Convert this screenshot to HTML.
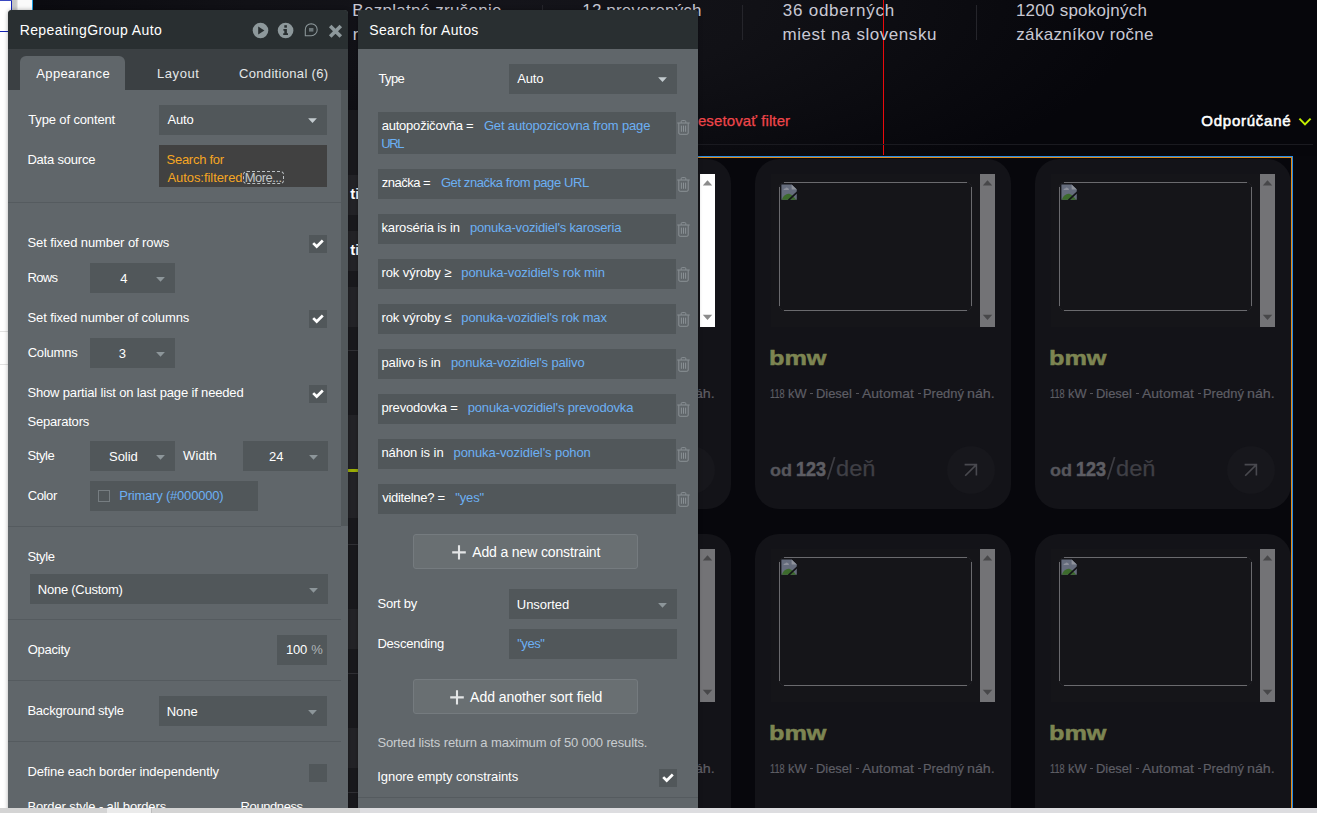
<!DOCTYPE html>
<html><head><meta charset="utf-8"><title>Bubble editor</title><style>
html,body{margin:0;padding:0}
body{width:1317px;height:813px;overflow:hidden;position:relative;background:#06060b;font-family:'Liberation Sans',sans-serif}
#r{position:absolute;left:0;top:0;width:1317px;height:813px;overflow:hidden}
#r div,#r svg,#r span.t{position:absolute}
span.t{white-space:nowrap;display:block}
</style></head><body><div id="r">
<div style="left:0px;top:0px;width:33px;height:813px;background:#ffffff;"></div>
<div style="left:0px;top:0px;width:33px;height:10px;background:#fafafa;"></div>
<div style="left:0px;top:0px;width:12px;height:10px;background:#ffffff;"></div>
<div style="left:12px;top:0px;width:6px;height:10px;background:linear-gradient(90deg,#c4c4c4 0,#c9c9c9 70%,#f0f0f0 100%);"></div>
<div style="left:32px;top:0px;width:1px;height:10px;background:#1a9fe4;"></div>
<div style="left:11px;top:0px;width:1px;height:10px;background:#1422b4;"></div>
<div style="left:0px;top:0px;width:12px;height:1px;background:#3a48c0;"></div>
<div style="left:0px;top:31px;width:8px;height:1px;background:#1422b4;"></div>
<div style="left:0px;top:331px;width:8px;height:1px;background:#e2e2e2;"></div>
<div style="left:0px;top:364px;width:8px;height:1px;background:#e2e2e2;"></div>
<div style="left:33px;top:0px;width:1284px;height:156px;background:radial-gradient(ellipse 640px 230px at 470px 0px, #14141a 0%, #111116 40%, rgba(7,7,12,0) 100%);"></div>
<div style="left:33px;top:156px;width:1284px;height:652px;background:#07070c;"></div>
<div style="left:542px;top:5px;width:1px;height:35px;background:#25252b;"></div>
<div style="left:742px;top:5px;width:1px;height:35px;background:#25252b;"></div>
<div style="left:976px;top:5px;width:1px;height:35px;background:#25252b;"></div>
<div style="left:883px;top:0px;width:1px;height:155px;background:#ea0a0c;"></div>
<svg style="left:1298px;top:117px" width="14" height="10" viewBox="0 0 14 10"><path d="M1.4 1.6 L7 7.4 L12.6 1.6" fill="none" stroke="#c4ee00" stroke-width="2"/></svg>
<div style="left:440px;top:144px;width:873px;height:1px;background:#1a1a20;"></div>
<div style="left:340px;top:110px;width:20px;height:698px;background:#19191d;"></div>
<div style="left:340px;top:175px;width:20px;height:40px;background:#232327;"></div>
<div style="left:340px;top:231px;width:20px;height:40px;background:#232327;"></div>
<div style="left:340px;top:287px;width:20px;height:40px;background:#232327;"></div>
<div style="left:340px;top:415px;width:20px;height:103px;background:#232327;"></div>
<div style="left:340px;top:609px;width:20px;height:40px;background:#232327;"></div>
<div style="left:340px;top:728px;width:20px;height:40px;background:#232327;"></div>
<div style="left:340px;top:350px;width:20px;height:1px;background:#303035;"></div>
<div style="left:340px;top:544px;width:20px;height:1px;background:#303035;"></div>
<div style="left:340px;top:673px;width:20px;height:1px;background:#303035;"></div>
<div style="left:340px;top:792px;width:20px;height:1px;background:#303035;"></div>
<div style="left:340px;top:469px;width:20px;height:3px;background:#9cae06;"></div>
<div style="left:440px;top:156px;width:853px;height:1px;background:#2a8be2;"></div>
<div style="left:440px;top:157px;width:852px;height:1px;background:#de8a1c;"></div>
<div style="left:1292px;top:156px;width:1px;height:652px;background:#2a8be2;"></div>
<div style="left:1291px;top:157px;width:1px;height:651px;background:#de8a1c;"></div>
<div style="left:475px;top:159px;width:256px;height:350px;background:#131318;border-radius:24px"></div>
<div style="left:491px;top:174px;width:224px;height:153px;background:#151519;"></div>
<svg style="left:499px;top:182px" width="193" height="129" viewBox="0 0 193 129"><rect x="0.5" y="0.5" width="192" height="128" rx="4.5" fill="none" stroke="#6a6a6e" stroke-opacity="0.12"/><path d="M5 0.5 H188 M5 128.5 H188 M0.5 5 V124 M192.5 5 V124" stroke="#6a6a6e" fill="none"/></svg>
<svg style="left:501px;top:184px" width="16" height="16" viewBox="0 0 16 16"><path d="M0.4 0.4 H10.6 L15.8 5.6 V15.8 H0.4Z" fill="#656c7c"/><path d="M10.6 0.4 V5.6 H15.8Z" fill="#8e929c"/><path d="M2.4 5.9 Q2.8 4.5 4.3 4.5 Q5 2.9 6.3 3.7 Q7.9 3.9 8 5.9Z" fill="#8c909b"/><path d="M0.8 15.8 C2.6 11 6.2 9 9.2 10.2 C12 11.4 13.6 13.6 15 15.8Z" fill="#3c6a2c"/><path d="M7.4 16.3 L16.3 8.1" stroke="#131318" stroke-width="1.7"/></svg>
<div style="left:700px;top:174px;width:15px;height:153px;background:#ffffff;"></div>
<svg style="left:700px;top:174px" width="15" height="153" viewBox="0 0 15 153"><path d="M2.8 11.4 L7.5 6.3 L12.2 11.4Z" fill="#8b8b8b"/><path d="M2.8 140.8 L7.5 145.9 L12.2 140.8Z" fill="#8b8b8b"/></svg>
<div style="left:530px;top:393px;width:3px;height:1px;background:#55555b;"></div>
<div style="left:576px;top:393px;width:3px;height:1px;background:#55555b;"></div>
<div style="left:638px;top:393px;width:3px;height:1px;background:#55555b;"></div>
<svg style="left:546px;top:456px" width="11" height="25" viewBox="0 0 11 25"><path d="M1.6 23.4 L8.6 1.0" stroke="#3d3d43" stroke-width="1.7" fill="none"/></svg>
<div style="left:667px;top:446px;width:48px;height:48px;background:#17171c;border-radius:24px"></div>
<svg style="left:683px;top:462px" width="16" height="16" viewBox="0 0 16 16"><path d="M2.2 13.8 L13.4 2.6 M1.6 2.6 H13.4 V13.4" stroke="#49494f" stroke-width="1.6" fill="none"/></svg>
<div style="left:755px;top:159px;width:256px;height:350px;background:#131318;border-radius:24px"></div>
<div style="left:771px;top:174px;width:224px;height:153px;background:#151519;"></div>
<svg style="left:779px;top:182px" width="193" height="129" viewBox="0 0 193 129"><rect x="0.5" y="0.5" width="192" height="128" rx="4.5" fill="none" stroke="#6a6a6e" stroke-opacity="0.12"/><path d="M5 0.5 H188 M5 128.5 H188 M0.5 5 V124 M192.5 5 V124" stroke="#6a6a6e" fill="none"/></svg>
<svg style="left:781px;top:184px" width="16" height="16" viewBox="0 0 16 16"><path d="M0.4 0.4 H10.6 L15.8 5.6 V15.8 H0.4Z" fill="#656c7c"/><path d="M10.6 0.4 V5.6 H15.8Z" fill="#8e929c"/><path d="M2.4 5.9 Q2.8 4.5 4.3 4.5 Q5 2.9 6.3 3.7 Q7.9 3.9 8 5.9Z" fill="#8c909b"/><path d="M0.8 15.8 C2.6 11 6.2 9 9.2 10.2 C12 11.4 13.6 13.6 15 15.8Z" fill="#3c6a2c"/><path d="M7.4 16.3 L16.3 8.1" stroke="#131318" stroke-width="1.7"/></svg>
<div style="left:980px;top:174px;width:15px;height:153px;background:#737376;"></div>
<svg style="left:980px;top:174px" width="15" height="153" viewBox="0 0 15 153"><path d="M2.8 11.4 L7.5 6.3 L12.2 11.4Z" fill="#48484a"/><path d="M2.8 140.8 L7.5 145.9 L12.2 140.8Z" fill="#48484a"/></svg>
<div style="left:810px;top:393px;width:3px;height:1px;background:#55555b;"></div>
<div style="left:856px;top:393px;width:3px;height:1px;background:#55555b;"></div>
<div style="left:918px;top:393px;width:3px;height:1px;background:#55555b;"></div>
<svg style="left:826px;top:456px" width="11" height="25" viewBox="0 0 11 25"><path d="M1.6 23.4 L8.6 1.0" stroke="#3d3d43" stroke-width="1.7" fill="none"/></svg>
<div style="left:947px;top:446px;width:48px;height:48px;background:#17171c;border-radius:24px"></div>
<svg style="left:963px;top:462px" width="16" height="16" viewBox="0 0 16 16"><path d="M2.2 13.8 L13.4 2.6 M1.6 2.6 H13.4 V13.4" stroke="#49494f" stroke-width="1.6" fill="none"/></svg>
<div style="left:1035px;top:159px;width:256px;height:350px;background:#131318;border-radius:24px"></div>
<div style="left:1051px;top:174px;width:224px;height:153px;background:#151519;"></div>
<svg style="left:1059px;top:182px" width="193" height="129" viewBox="0 0 193 129"><rect x="0.5" y="0.5" width="192" height="128" rx="4.5" fill="none" stroke="#6a6a6e" stroke-opacity="0.12"/><path d="M5 0.5 H188 M5 128.5 H188 M0.5 5 V124 M192.5 5 V124" stroke="#6a6a6e" fill="none"/></svg>
<svg style="left:1061px;top:184px" width="16" height="16" viewBox="0 0 16 16"><path d="M0.4 0.4 H10.6 L15.8 5.6 V15.8 H0.4Z" fill="#656c7c"/><path d="M10.6 0.4 V5.6 H15.8Z" fill="#8e929c"/><path d="M2.4 5.9 Q2.8 4.5 4.3 4.5 Q5 2.9 6.3 3.7 Q7.9 3.9 8 5.9Z" fill="#8c909b"/><path d="M0.8 15.8 C2.6 11 6.2 9 9.2 10.2 C12 11.4 13.6 13.6 15 15.8Z" fill="#3c6a2c"/><path d="M7.4 16.3 L16.3 8.1" stroke="#131318" stroke-width="1.7"/></svg>
<div style="left:1260px;top:174px;width:15px;height:153px;background:#737376;"></div>
<svg style="left:1260px;top:174px" width="15" height="153" viewBox="0 0 15 153"><path d="M2.8 11.4 L7.5 6.3 L12.2 11.4Z" fill="#48484a"/><path d="M2.8 140.8 L7.5 145.9 L12.2 140.8Z" fill="#48484a"/></svg>
<div style="left:1090px;top:393px;width:3px;height:1px;background:#55555b;"></div>
<div style="left:1136px;top:393px;width:3px;height:1px;background:#55555b;"></div>
<div style="left:1198px;top:393px;width:3px;height:1px;background:#55555b;"></div>
<svg style="left:1106px;top:456px" width="11" height="25" viewBox="0 0 11 25"><path d="M1.6 23.4 L8.6 1.0" stroke="#3d3d43" stroke-width="1.7" fill="none"/></svg>
<div style="left:1227px;top:446px;width:48px;height:48px;background:#17171c;border-radius:24px"></div>
<svg style="left:1243px;top:462px" width="16" height="16" viewBox="0 0 16 16"><path d="M2.2 13.8 L13.4 2.6 M1.6 2.6 H13.4 V13.4" stroke="#49494f" stroke-width="1.6" fill="none"/></svg>
<div style="left:475px;top:534px;width:256px;height:350px;background:#131318;border-radius:24px"></div>
<div style="left:491px;top:549px;width:224px;height:153px;background:#151519;"></div>
<svg style="left:499px;top:557px" width="193" height="129" viewBox="0 0 193 129"><rect x="0.5" y="0.5" width="192" height="128" rx="4.5" fill="none" stroke="#6a6a6e" stroke-opacity="0.12"/><path d="M5 0.5 H188 M5 128.5 H188 M0.5 5 V124 M192.5 5 V124" stroke="#6a6a6e" fill="none"/></svg>
<svg style="left:501px;top:559px" width="16" height="16" viewBox="0 0 16 16"><path d="M0.4 0.4 H10.6 L15.8 5.6 V15.8 H0.4Z" fill="#656c7c"/><path d="M10.6 0.4 V5.6 H15.8Z" fill="#8e929c"/><path d="M2.4 5.9 Q2.8 4.5 4.3 4.5 Q5 2.9 6.3 3.7 Q7.9 3.9 8 5.9Z" fill="#8c909b"/><path d="M0.8 15.8 C2.6 11 6.2 9 9.2 10.2 C12 11.4 13.6 13.6 15 15.8Z" fill="#3c6a2c"/><path d="M7.4 16.3 L16.3 8.1" stroke="#131318" stroke-width="1.7"/></svg>
<div style="left:700px;top:549px;width:15px;height:153px;background:#737376;"></div>
<svg style="left:700px;top:549px" width="15" height="153" viewBox="0 0 15 153"><path d="M2.8 11.4 L7.5 6.3 L12.2 11.4Z" fill="#48484a"/><path d="M2.8 140.8 L7.5 145.9 L12.2 140.8Z" fill="#48484a"/></svg>
<div style="left:530px;top:768px;width:3px;height:1px;background:#55555b;"></div>
<div style="left:576px;top:768px;width:3px;height:1px;background:#55555b;"></div>
<div style="left:638px;top:768px;width:3px;height:1px;background:#55555b;"></div>
<svg style="left:546px;top:831px" width="11" height="25" viewBox="0 0 11 25"><path d="M1.6 23.4 L8.6 1.0" stroke="#3d3d43" stroke-width="1.7" fill="none"/></svg>
<div style="left:667px;top:821px;width:48px;height:48px;background:#17171c;border-radius:24px"></div>
<svg style="left:683px;top:837px" width="16" height="16" viewBox="0 0 16 16"><path d="M2.2 13.8 L13.4 2.6 M1.6 2.6 H13.4 V13.4" stroke="#49494f" stroke-width="1.6" fill="none"/></svg>
<div style="left:755px;top:534px;width:256px;height:350px;background:#131318;border-radius:24px"></div>
<div style="left:771px;top:549px;width:224px;height:153px;background:#151519;"></div>
<svg style="left:779px;top:557px" width="193" height="129" viewBox="0 0 193 129"><rect x="0.5" y="0.5" width="192" height="128" rx="4.5" fill="none" stroke="#6a6a6e" stroke-opacity="0.12"/><path d="M5 0.5 H188 M5 128.5 H188 M0.5 5 V124 M192.5 5 V124" stroke="#6a6a6e" fill="none"/></svg>
<svg style="left:781px;top:559px" width="16" height="16" viewBox="0 0 16 16"><path d="M0.4 0.4 H10.6 L15.8 5.6 V15.8 H0.4Z" fill="#656c7c"/><path d="M10.6 0.4 V5.6 H15.8Z" fill="#8e929c"/><path d="M2.4 5.9 Q2.8 4.5 4.3 4.5 Q5 2.9 6.3 3.7 Q7.9 3.9 8 5.9Z" fill="#8c909b"/><path d="M0.8 15.8 C2.6 11 6.2 9 9.2 10.2 C12 11.4 13.6 13.6 15 15.8Z" fill="#3c6a2c"/><path d="M7.4 16.3 L16.3 8.1" stroke="#131318" stroke-width="1.7"/></svg>
<div style="left:980px;top:549px;width:15px;height:153px;background:#737376;"></div>
<svg style="left:980px;top:549px" width="15" height="153" viewBox="0 0 15 153"><path d="M2.8 11.4 L7.5 6.3 L12.2 11.4Z" fill="#48484a"/><path d="M2.8 140.8 L7.5 145.9 L12.2 140.8Z" fill="#48484a"/></svg>
<div style="left:810px;top:768px;width:3px;height:1px;background:#55555b;"></div>
<div style="left:856px;top:768px;width:3px;height:1px;background:#55555b;"></div>
<div style="left:918px;top:768px;width:3px;height:1px;background:#55555b;"></div>
<svg style="left:826px;top:831px" width="11" height="25" viewBox="0 0 11 25"><path d="M1.6 23.4 L8.6 1.0" stroke="#3d3d43" stroke-width="1.7" fill="none"/></svg>
<div style="left:947px;top:821px;width:48px;height:48px;background:#17171c;border-radius:24px"></div>
<svg style="left:963px;top:837px" width="16" height="16" viewBox="0 0 16 16"><path d="M2.2 13.8 L13.4 2.6 M1.6 2.6 H13.4 V13.4" stroke="#49494f" stroke-width="1.6" fill="none"/></svg>
<div style="left:1035px;top:534px;width:256px;height:350px;background:#131318;border-radius:24px"></div>
<div style="left:1051px;top:549px;width:224px;height:153px;background:#151519;"></div>
<svg style="left:1059px;top:557px" width="193" height="129" viewBox="0 0 193 129"><rect x="0.5" y="0.5" width="192" height="128" rx="4.5" fill="none" stroke="#6a6a6e" stroke-opacity="0.12"/><path d="M5 0.5 H188 M5 128.5 H188 M0.5 5 V124 M192.5 5 V124" stroke="#6a6a6e" fill="none"/></svg>
<svg style="left:1061px;top:559px" width="16" height="16" viewBox="0 0 16 16"><path d="M0.4 0.4 H10.6 L15.8 5.6 V15.8 H0.4Z" fill="#656c7c"/><path d="M10.6 0.4 V5.6 H15.8Z" fill="#8e929c"/><path d="M2.4 5.9 Q2.8 4.5 4.3 4.5 Q5 2.9 6.3 3.7 Q7.9 3.9 8 5.9Z" fill="#8c909b"/><path d="M0.8 15.8 C2.6 11 6.2 9 9.2 10.2 C12 11.4 13.6 13.6 15 15.8Z" fill="#3c6a2c"/><path d="M7.4 16.3 L16.3 8.1" stroke="#131318" stroke-width="1.7"/></svg>
<div style="left:1260px;top:549px;width:15px;height:153px;background:#737376;"></div>
<svg style="left:1260px;top:549px" width="15" height="153" viewBox="0 0 15 153"><path d="M2.8 11.4 L7.5 6.3 L12.2 11.4Z" fill="#48484a"/><path d="M2.8 140.8 L7.5 145.9 L12.2 140.8Z" fill="#48484a"/></svg>
<div style="left:1090px;top:768px;width:3px;height:1px;background:#55555b;"></div>
<div style="left:1136px;top:768px;width:3px;height:1px;background:#55555b;"></div>
<div style="left:1198px;top:768px;width:3px;height:1px;background:#55555b;"></div>
<svg style="left:1106px;top:831px" width="11" height="25" viewBox="0 0 11 25"><path d="M1.6 23.4 L8.6 1.0" stroke="#3d3d43" stroke-width="1.7" fill="none"/></svg>
<div style="left:1227px;top:821px;width:48px;height:48px;background:#17171c;border-radius:24px"></div>
<svg style="left:1243px;top:837px" width="16" height="16" viewBox="0 0 16 16"><path d="M2.2 13.8 L13.4 2.6 M1.6 2.6 H13.4 V13.4" stroke="#49494f" stroke-width="1.6" fill="none"/></svg>
<span class="t" style="left:352.37px;top:-1.00px;font-size:17px;line-height:24px;color:#c9c9d4;letter-spacing:0.262px;">Bezplatné zrušenie</span>
<span class="t" style="left:352.74px;top:23.00px;font-size:17px;line-height:24px;color:#c9c9d4;letter-spacing:0.000px;">rezervácie</span>
<span class="t" style="left:582.28px;top:-1.00px;font-size:17px;line-height:24px;color:#c9c9d4;letter-spacing:0.155px;">12 preverených</span>
<span class="t" style="left:782.69px;top:-1.00px;font-size:17px;line-height:24px;color:#c9c9d4;letter-spacing:0.779px;">36 odberných</span>
<span class="t" style="left:782.44px;top:23.00px;font-size:17px;line-height:24px;color:#c9c9d4;letter-spacing:0.552px;">miest na slovensku</span>
<span class="t" style="left:1015.88px;top:-1.00px;font-size:17px;line-height:24px;color:#c9c9d4;letter-spacing:0.248px;">1200 spokojných</span>
<span class="t" style="left:1016.29px;top:23.00px;font-size:17px;line-height:24px;color:#c9c9d4;letter-spacing:0.328px;">zákazníkov ročne</span>
<span class="t" style="left:697.90px;top:110.00px;font-size:15px;line-height:22px;color:#f0464b;letter-spacing:0.110px;-webkit-text-stroke:0.25px #f0464b;">esetovať filter</span>
<span class="t" style="left:1201.34px;top:110.00px;font-size:15px;line-height:22px;color:#ffffff;letter-spacing:0.752px;-webkit-text-stroke:0.55px #fff;">Odporúčané</span>
<span class="t" style="left:350.32px;top:183.60px;font-size:15px;line-height:20px;font-weight:700;color:#ffffff;letter-spacing:-0.037px;">ti</span>
<span class="t" style="left:350.32px;top:240.20px;font-size:15px;line-height:20px;font-weight:700;color:#ffffff;letter-spacing:-0.037px;">ti</span>
<span class="t" style="left:489.07px;top:344.00px;font-size:21px;line-height:28px;font-weight:700;color:#7d8552;letter-spacing:0.000px;transform:scaleX(1.2021);transform-origin:0 0;-webkit-text-stroke:0.5px #7d8552;">bmw</span>
<span class="t" style="left:490.47px;top:385.00px;font-size:13px;line-height:18px;color:#5e5e65;letter-spacing:0.000px;transform:scaleX(0.7001);transform-origin:0 0;-webkit-text-stroke:0.2px #5e5e65;">118</span>
<span class="t" style="left:508.04px;top:385.00px;font-size:13px;line-height:18px;color:#5e5e65;letter-spacing:0.000px;transform:scaleX(0.9862);transform-origin:0 0;-webkit-text-stroke:0.2px #5e5e65;">kW</span>
<span class="t" style="left:535.81px;top:385.00px;font-size:13px;line-height:18px;color:#5e5e65;letter-spacing:0.000px;transform:scaleX(0.9931);transform-origin:0 0;-webkit-text-stroke:0.2px #5e5e65;">Diesel</span>
<span class="t" style="left:581.71px;top:385.00px;font-size:13px;line-height:18px;color:#5e5e65;letter-spacing:0.000px;transform:scaleX(1.0707);transform-origin:0 0;-webkit-text-stroke:0.2px #5e5e65;">Automat</span>
<span class="t" style="left:642.71px;top:385.00px;font-size:13px;line-height:18px;color:#5e5e65;letter-spacing:0.000px;transform:scaleX(0.9914);transform-origin:0 0;-webkit-text-stroke:0.2px #5e5e65;">Predný</span>
<span class="t" style="left:687.06px;top:385.00px;font-size:13px;line-height:18px;color:#5e5e65;letter-spacing:0.000px;transform:scaleX(1.0934);transform-origin:0 0;-webkit-text-stroke:0.2px #5e5e65;">náh.</span>
<span class="t" style="left:490.06px;top:460.00px;font-size:17px;line-height:22px;font-weight:700;color:#56565c;letter-spacing:0.000px;transform:scaleX(1.0629);transform-origin:0 0;-webkit-text-stroke:0.3px #56565c;">od</span>
<span class="t" style="left:515.80px;top:456.00px;font-size:21px;line-height:26px;font-weight:700;color:#5e5e64;letter-spacing:0.000px;transform:scaleX(0.8592);transform-origin:0 0;-webkit-text-stroke:0.5px #5e5e64;">123</span>
<span class="t" style="left:555.70px;top:455.00px;font-size:22px;line-height:28px;color:#3f3f45;letter-spacing:0.000px;transform:scaleX(1.0752);transform-origin:0 0;-webkit-text-stroke:0.25px #3f3f45;">deň</span>
<span class="t" style="left:769.07px;top:344.00px;font-size:21px;line-height:28px;font-weight:700;color:#7d8552;letter-spacing:0.000px;transform:scaleX(1.2021);transform-origin:0 0;-webkit-text-stroke:0.5px #7d8552;">bmw</span>
<span class="t" style="left:770.47px;top:385.00px;font-size:13px;line-height:18px;color:#5e5e65;letter-spacing:0.000px;transform:scaleX(0.7001);transform-origin:0 0;-webkit-text-stroke:0.2px #5e5e65;">118</span>
<span class="t" style="left:788.04px;top:385.00px;font-size:13px;line-height:18px;color:#5e5e65;letter-spacing:0.000px;transform:scaleX(0.9862);transform-origin:0 0;-webkit-text-stroke:0.2px #5e5e65;">kW</span>
<span class="t" style="left:815.81px;top:385.00px;font-size:13px;line-height:18px;color:#5e5e65;letter-spacing:0.000px;transform:scaleX(0.9931);transform-origin:0 0;-webkit-text-stroke:0.2px #5e5e65;">Diesel</span>
<span class="t" style="left:861.71px;top:385.00px;font-size:13px;line-height:18px;color:#5e5e65;letter-spacing:0.000px;transform:scaleX(1.0707);transform-origin:0 0;-webkit-text-stroke:0.2px #5e5e65;">Automat</span>
<span class="t" style="left:922.71px;top:385.00px;font-size:13px;line-height:18px;color:#5e5e65;letter-spacing:0.000px;transform:scaleX(0.9914);transform-origin:0 0;-webkit-text-stroke:0.2px #5e5e65;">Predný</span>
<span class="t" style="left:967.06px;top:385.00px;font-size:13px;line-height:18px;color:#5e5e65;letter-spacing:0.000px;transform:scaleX(1.0934);transform-origin:0 0;-webkit-text-stroke:0.2px #5e5e65;">náh.</span>
<span class="t" style="left:770.06px;top:460.00px;font-size:17px;line-height:22px;font-weight:700;color:#56565c;letter-spacing:0.000px;transform:scaleX(1.0629);transform-origin:0 0;-webkit-text-stroke:0.3px #56565c;">od</span>
<span class="t" style="left:795.80px;top:456.00px;font-size:21px;line-height:26px;font-weight:700;color:#5e5e64;letter-spacing:0.000px;transform:scaleX(0.8592);transform-origin:0 0;-webkit-text-stroke:0.5px #5e5e64;">123</span>
<span class="t" style="left:835.70px;top:455.00px;font-size:22px;line-height:28px;color:#3f3f45;letter-spacing:0.000px;transform:scaleX(1.0752);transform-origin:0 0;-webkit-text-stroke:0.25px #3f3f45;">deň</span>
<span class="t" style="left:1049.07px;top:344.00px;font-size:21px;line-height:28px;font-weight:700;color:#7d8552;letter-spacing:0.000px;transform:scaleX(1.2021);transform-origin:0 0;-webkit-text-stroke:0.5px #7d8552;">bmw</span>
<span class="t" style="left:1050.47px;top:385.00px;font-size:13px;line-height:18px;color:#5e5e65;letter-spacing:0.000px;transform:scaleX(0.7001);transform-origin:0 0;-webkit-text-stroke:0.2px #5e5e65;">118</span>
<span class="t" style="left:1068.04px;top:385.00px;font-size:13px;line-height:18px;color:#5e5e65;letter-spacing:0.000px;transform:scaleX(0.9862);transform-origin:0 0;-webkit-text-stroke:0.2px #5e5e65;">kW</span>
<span class="t" style="left:1095.81px;top:385.00px;font-size:13px;line-height:18px;color:#5e5e65;letter-spacing:0.000px;transform:scaleX(0.9931);transform-origin:0 0;-webkit-text-stroke:0.2px #5e5e65;">Diesel</span>
<span class="t" style="left:1141.71px;top:385.00px;font-size:13px;line-height:18px;color:#5e5e65;letter-spacing:0.000px;transform:scaleX(1.0707);transform-origin:0 0;-webkit-text-stroke:0.2px #5e5e65;">Automat</span>
<span class="t" style="left:1202.71px;top:385.00px;font-size:13px;line-height:18px;color:#5e5e65;letter-spacing:0.000px;transform:scaleX(0.9914);transform-origin:0 0;-webkit-text-stroke:0.2px #5e5e65;">Predný</span>
<span class="t" style="left:1247.06px;top:385.00px;font-size:13px;line-height:18px;color:#5e5e65;letter-spacing:0.000px;transform:scaleX(1.0934);transform-origin:0 0;-webkit-text-stroke:0.2px #5e5e65;">náh.</span>
<span class="t" style="left:1050.06px;top:460.00px;font-size:17px;line-height:22px;font-weight:700;color:#56565c;letter-spacing:0.000px;transform:scaleX(1.0629);transform-origin:0 0;-webkit-text-stroke:0.3px #56565c;">od</span>
<span class="t" style="left:1075.80px;top:456.00px;font-size:21px;line-height:26px;font-weight:700;color:#5e5e64;letter-spacing:0.000px;transform:scaleX(0.8592);transform-origin:0 0;-webkit-text-stroke:0.5px #5e5e64;">123</span>
<span class="t" style="left:1115.70px;top:455.00px;font-size:22px;line-height:28px;color:#3f3f45;letter-spacing:0.000px;transform:scaleX(1.0752);transform-origin:0 0;-webkit-text-stroke:0.25px #3f3f45;">deň</span>
<span class="t" style="left:489.07px;top:719.00px;font-size:21px;line-height:28px;font-weight:700;color:#7d8552;letter-spacing:0.000px;transform:scaleX(1.2021);transform-origin:0 0;-webkit-text-stroke:0.5px #7d8552;">bmw</span>
<span class="t" style="left:490.47px;top:760.00px;font-size:13px;line-height:18px;color:#5e5e65;letter-spacing:0.000px;transform:scaleX(0.7001);transform-origin:0 0;-webkit-text-stroke:0.2px #5e5e65;">118</span>
<span class="t" style="left:508.04px;top:760.00px;font-size:13px;line-height:18px;color:#5e5e65;letter-spacing:0.000px;transform:scaleX(0.9862);transform-origin:0 0;-webkit-text-stroke:0.2px #5e5e65;">kW</span>
<span class="t" style="left:535.81px;top:760.00px;font-size:13px;line-height:18px;color:#5e5e65;letter-spacing:0.000px;transform:scaleX(0.9931);transform-origin:0 0;-webkit-text-stroke:0.2px #5e5e65;">Diesel</span>
<span class="t" style="left:581.71px;top:760.00px;font-size:13px;line-height:18px;color:#5e5e65;letter-spacing:0.000px;transform:scaleX(1.0707);transform-origin:0 0;-webkit-text-stroke:0.2px #5e5e65;">Automat</span>
<span class="t" style="left:642.71px;top:760.00px;font-size:13px;line-height:18px;color:#5e5e65;letter-spacing:0.000px;transform:scaleX(0.9914);transform-origin:0 0;-webkit-text-stroke:0.2px #5e5e65;">Predný</span>
<span class="t" style="left:687.06px;top:760.00px;font-size:13px;line-height:18px;color:#5e5e65;letter-spacing:0.000px;transform:scaleX(1.0934);transform-origin:0 0;-webkit-text-stroke:0.2px #5e5e65;">náh.</span>
<span class="t" style="left:490.06px;top:835.00px;font-size:17px;line-height:22px;font-weight:700;color:#56565c;letter-spacing:0.000px;transform:scaleX(1.0629);transform-origin:0 0;-webkit-text-stroke:0.3px #56565c;">od</span>
<span class="t" style="left:515.80px;top:831.00px;font-size:21px;line-height:26px;font-weight:700;color:#5e5e64;letter-spacing:0.000px;transform:scaleX(0.8592);transform-origin:0 0;-webkit-text-stroke:0.5px #5e5e64;">123</span>
<span class="t" style="left:555.70px;top:830.00px;font-size:22px;line-height:28px;color:#3f3f45;letter-spacing:0.000px;transform:scaleX(1.0752);transform-origin:0 0;-webkit-text-stroke:0.25px #3f3f45;">deň</span>
<span class="t" style="left:769.07px;top:719.00px;font-size:21px;line-height:28px;font-weight:700;color:#7d8552;letter-spacing:0.000px;transform:scaleX(1.2021);transform-origin:0 0;-webkit-text-stroke:0.5px #7d8552;">bmw</span>
<span class="t" style="left:770.47px;top:760.00px;font-size:13px;line-height:18px;color:#5e5e65;letter-spacing:0.000px;transform:scaleX(0.7001);transform-origin:0 0;-webkit-text-stroke:0.2px #5e5e65;">118</span>
<span class="t" style="left:788.04px;top:760.00px;font-size:13px;line-height:18px;color:#5e5e65;letter-spacing:0.000px;transform:scaleX(0.9862);transform-origin:0 0;-webkit-text-stroke:0.2px #5e5e65;">kW</span>
<span class="t" style="left:815.81px;top:760.00px;font-size:13px;line-height:18px;color:#5e5e65;letter-spacing:0.000px;transform:scaleX(0.9931);transform-origin:0 0;-webkit-text-stroke:0.2px #5e5e65;">Diesel</span>
<span class="t" style="left:861.71px;top:760.00px;font-size:13px;line-height:18px;color:#5e5e65;letter-spacing:0.000px;transform:scaleX(1.0707);transform-origin:0 0;-webkit-text-stroke:0.2px #5e5e65;">Automat</span>
<span class="t" style="left:922.71px;top:760.00px;font-size:13px;line-height:18px;color:#5e5e65;letter-spacing:0.000px;transform:scaleX(0.9914);transform-origin:0 0;-webkit-text-stroke:0.2px #5e5e65;">Predný</span>
<span class="t" style="left:967.06px;top:760.00px;font-size:13px;line-height:18px;color:#5e5e65;letter-spacing:0.000px;transform:scaleX(1.0934);transform-origin:0 0;-webkit-text-stroke:0.2px #5e5e65;">náh.</span>
<span class="t" style="left:770.06px;top:835.00px;font-size:17px;line-height:22px;font-weight:700;color:#56565c;letter-spacing:0.000px;transform:scaleX(1.0629);transform-origin:0 0;-webkit-text-stroke:0.3px #56565c;">od</span>
<span class="t" style="left:795.80px;top:831.00px;font-size:21px;line-height:26px;font-weight:700;color:#5e5e64;letter-spacing:0.000px;transform:scaleX(0.8592);transform-origin:0 0;-webkit-text-stroke:0.5px #5e5e64;">123</span>
<span class="t" style="left:835.70px;top:830.00px;font-size:22px;line-height:28px;color:#3f3f45;letter-spacing:0.000px;transform:scaleX(1.0752);transform-origin:0 0;-webkit-text-stroke:0.25px #3f3f45;">deň</span>
<span class="t" style="left:1049.07px;top:719.00px;font-size:21px;line-height:28px;font-weight:700;color:#7d8552;letter-spacing:0.000px;transform:scaleX(1.2021);transform-origin:0 0;-webkit-text-stroke:0.5px #7d8552;">bmw</span>
<span class="t" style="left:1050.47px;top:760.00px;font-size:13px;line-height:18px;color:#5e5e65;letter-spacing:0.000px;transform:scaleX(0.7001);transform-origin:0 0;-webkit-text-stroke:0.2px #5e5e65;">118</span>
<span class="t" style="left:1068.04px;top:760.00px;font-size:13px;line-height:18px;color:#5e5e65;letter-spacing:0.000px;transform:scaleX(0.9862);transform-origin:0 0;-webkit-text-stroke:0.2px #5e5e65;">kW</span>
<span class="t" style="left:1095.81px;top:760.00px;font-size:13px;line-height:18px;color:#5e5e65;letter-spacing:0.000px;transform:scaleX(0.9931);transform-origin:0 0;-webkit-text-stroke:0.2px #5e5e65;">Diesel</span>
<span class="t" style="left:1141.71px;top:760.00px;font-size:13px;line-height:18px;color:#5e5e65;letter-spacing:0.000px;transform:scaleX(1.0707);transform-origin:0 0;-webkit-text-stroke:0.2px #5e5e65;">Automat</span>
<span class="t" style="left:1202.71px;top:760.00px;font-size:13px;line-height:18px;color:#5e5e65;letter-spacing:0.000px;transform:scaleX(0.9914);transform-origin:0 0;-webkit-text-stroke:0.2px #5e5e65;">Predný</span>
<span class="t" style="left:1247.06px;top:760.00px;font-size:13px;line-height:18px;color:#5e5e65;letter-spacing:0.000px;transform:scaleX(1.0934);transform-origin:0 0;-webkit-text-stroke:0.2px #5e5e65;">náh.</span>
<span class="t" style="left:1050.06px;top:835.00px;font-size:17px;line-height:22px;font-weight:700;color:#56565c;letter-spacing:0.000px;transform:scaleX(1.0629);transform-origin:0 0;-webkit-text-stroke:0.3px #56565c;">od</span>
<span class="t" style="left:1075.80px;top:831.00px;font-size:21px;line-height:26px;font-weight:700;color:#5e5e64;letter-spacing:0.000px;transform:scaleX(0.8592);transform-origin:0 0;-webkit-text-stroke:0.5px #5e5e64;">123</span>
<span class="t" style="left:1115.70px;top:830.00px;font-size:22px;line-height:28px;color:#3f3f45;letter-spacing:0.000px;transform:scaleX(1.0752);transform-origin:0 0;-webkit-text-stroke:0.25px #3f3f45;">deň</span>
<div style="left:8px;top:10px;width:340px;height:803px;background:#60666a;border-radius:4px 4px 0 0;box-shadow:0 0 4px rgba(0,0,0,.32)"></div>
<div style="left:8px;top:10px;width:340px;height:39px;background:#292f31;border-radius:4px 4px 0 0"></div>
<div style="left:8px;top:49px;width:340px;height:41px;background:#3b4043;"></div>
<div style="left:20px;top:56px;width:105px;height:34px;background:#60666a;border-radius:6px 6px 0 0"></div>
<div style="left:341px;top:90px;width:7px;height:436px;background:#52585b;"></div>
<div style="left:8px;top:202px;width:333px;height:1px;background:#555b5f;"></div>
<div style="left:8px;top:526px;width:333px;height:1px;background:#555b5f;"></div>
<div style="left:8px;top:619px;width:333px;height:1px;background:#555b5f;"></div>
<div style="left:8px;top:680px;width:333px;height:1px;background:#555b5f;"></div>
<div style="left:8px;top:741px;width:333px;height:1px;background:#555b5f;"></div>
<svg style="left:252px;top:22px" width="17" height="17" viewBox="0 0 17 17"><circle cx="8.5" cy="8.5" r="7.8" fill="#8d989b"/><path d="M6.2 4.6 L12.4 8.5 L6.2 12.4Z" fill="#292f31"/></svg>
<svg style="left:277px;top:22px" width="17" height="17" viewBox="0 0 17 17"><circle cx="8.6" cy="8.5" r="7.8" fill="#8d989b"/><rect x="7.3" y="3.2" width="2.6" height="2.5" fill="#292f31"/><path d="M6.4 7 H9.9 V11.3 H11 V13 H6.2 V11.3 H7.3 V8.7 H6.4Z" fill="#292f31"/></svg>
<svg style="left:303px;top:22px" width="17" height="17" viewBox="0 0 17 17"><path d="M8.2 1.7 A6 6 0 1 1 8.2 13.7 H2.3 V7.7 A6 6 0 0 1 8.2 1.7Z" fill="none" stroke="#8d989b" stroke-width="1.05"/><rect x="6" y="6" width="4.4" height="3.6" fill="#6c7679"/></svg>
<svg style="left:328px;top:23px" width="15" height="16" viewBox="0 0 15 16"><path d="M2.2 2.9 L12.8 13.5 M12.8 2.9 L2.2 13.5" stroke="#8d989b" stroke-width="3.6" fill="none"/></svg>
<div style="left:159px;top:105px;width:168px;height:30px;background:#51575a;"></div>
<svg style="left:307.6px;top:118px" width="10" height="7" viewBox="0 0 10 7"><path d="M0.1 0.2 L8.9 0.2 L4.5 5.1000000000000005Z" fill="#c3cbcf"/></svg>
<div style="left:159px;top:145px;width:168px;height:42px;background:#414141;"></div>
<div style="left:243px;top:171px;width:41px;height:13px;background:transparent;border:1px dashed #bcc1c4;border-radius:4px;box-sizing:border-box"></div>
<div style="left:309px;top:235px;width:18px;height:18px;background:#51575a;"></div>
<svg style="left:309px;top:235px" width="18" height="18" viewBox="0 0 18 18"><path d="M4.2 8.1 L7.7 11.5 L13.8 5.5" fill="none" stroke="#fff" stroke-width="2.7"/></svg>
<div style="left:90px;top:263px;width:85px;height:30px;background:#51575a;"></div>
<svg style="left:155.6px;top:276px" width="10" height="7" viewBox="0 0 10 7"><path d="M0.1 0.9 L8.9 0.9 L4.5 5.800000000000001Z" fill="#8d969a"/></svg>
<div style="left:309px;top:310px;width:18px;height:18px;background:#51575a;"></div>
<svg style="left:309px;top:310px" width="18" height="18" viewBox="0 0 18 18"><path d="M4.2 8.1 L7.7 11.5 L13.8 5.5" fill="none" stroke="#fff" stroke-width="2.7"/></svg>
<div style="left:90px;top:338px;width:85px;height:30px;background:#51575a;"></div>
<svg style="left:155.6px;top:351px" width="10" height="7" viewBox="0 0 10 7"><path d="M0.1 0.9 L8.9 0.9 L4.5 5.800000000000001Z" fill="#8d969a"/></svg>
<div style="left:309px;top:385px;width:18px;height:18px;background:#51575a;"></div>
<svg style="left:309px;top:385px" width="18" height="18" viewBox="0 0 18 18"><path d="M4.2 8.1 L7.7 11.5 L13.8 5.5" fill="none" stroke="#fff" stroke-width="2.7"/></svg>
<div style="left:90px;top:441px;width:85px;height:30px;background:#51575a;"></div>
<svg style="left:155.6px;top:454px" width="10" height="7" viewBox="0 0 10 7"><path d="M0.1 0.9 L8.9 0.9 L4.5 5.800000000000001Z" fill="#8d969a"/></svg>
<div style="left:243px;top:441px;width:85px;height:30px;background:#51575a;"></div>
<svg style="left:308.6px;top:454px" width="10" height="7" viewBox="0 0 10 7"><path d="M0.1 0.9 L8.9 0.9 L4.5 5.800000000000001Z" fill="#8d969a"/></svg>
<div style="left:90px;top:481px;width:168px;height:30px;background:#51575a;"></div>
<div style="left:98px;top:490px;width:12px;height:12px;background:transparent;border:1px solid #767d81;box-sizing:border-box"></div>
<div style="left:30px;top:574px;width:298px;height:30px;background:#51575a;"></div>
<svg style="left:308.6px;top:587px" width="10" height="7" viewBox="0 0 10 7"><path d="M0.1 0.9 L8.9 0.9 L4.5 5.800000000000001Z" fill="#8d969a"/></svg>
<div style="left:277px;top:635px;width:50px;height:30px;background:#51575a;"></div>
<div style="left:159px;top:696px;width:168px;height:30px;background:#51575a;"></div>
<svg style="left:307.8px;top:709px" width="10" height="7" viewBox="0 0 10 7"><path d="M0.1 0.9 L8.9 0.9 L4.5 5.800000000000001Z" fill="#8d969a"/></svg>
<div style="left:309px;top:764px;width:18px;height:18px;background:#51575a;"></div>
<span class="t" style="left:19.64px;top:20.00px;font-size:14px;line-height:20px;color:#ffffff;letter-spacing:0.415px;">RepeatingGroup Auto</span>
<span class="t" style="left:36.31px;top:65.00px;font-size:13px;line-height:18px;color:#ffffff;letter-spacing:0.358px;">Appearance</span>
<span class="t" style="left:157.00px;top:65.00px;font-size:13px;line-height:18px;color:#e4e7e8;letter-spacing:0.562px;">Layout</span>
<span class="t" style="left:239.09px;top:65.00px;font-size:13px;line-height:18px;color:#e4e7e8;letter-spacing:0.316px;">Conditional (6)</span>
<span class="t" style="left:28.28px;top:111.00px;font-size:13px;line-height:18px;color:#ffffff;letter-spacing:-0.140px;">Type of content</span>
<span class="t" style="left:167.41px;top:111.00px;font-size:13px;line-height:18px;color:#ffffff;letter-spacing:-0.158px;">Auto</span>
<span class="t" style="left:27.40px;top:151.00px;font-size:13px;line-height:18px;color:#ffffff;letter-spacing:-0.204px;">Data source</span>
<span class="t" style="left:166.58px;top:151.00px;font-size:13px;line-height:18px;color:#f5a623;letter-spacing:-0.281px;">Search for</span>
<span class="t" style="left:167.41px;top:169.00px;font-size:13px;line-height:18px;color:#f5a623;letter-spacing:-0.057px;">Autos:filtered</span>
<span class="t" style="left:244.70px;top:169.00px;font-size:13px;line-height:18px;color:#c4c8ca;letter-spacing:-0.511px;">More...</span>
<span class="t" style="left:27.48px;top:234.00px;font-size:13px;line-height:18px;color:#ffffff;letter-spacing:-0.086px;">Set fixed number of rows</span>
<span class="t" style="left:27.40px;top:269.00px;font-size:13px;line-height:18px;color:#ffffff;letter-spacing:-0.637px;">Rows</span>
<span class="t" style="left:120.28px;top:270.00px;font-size:13px;line-height:18px;color:#ffffff;letter-spacing:0.000px;">4</span>
<span class="t" style="left:27.48px;top:309.00px;font-size:13px;line-height:18px;color:#ffffff;letter-spacing:-0.114px;">Set fixed number of columns</span>
<span class="t" style="left:27.69px;top:344.00px;font-size:13px;line-height:18px;color:#ffffff;letter-spacing:-0.212px;">Columns</span>
<span class="t" style="left:118.63px;top:345.00px;font-size:13px;line-height:18px;color:#ffffff;letter-spacing:0.000px;">3</span>
<span class="t" style="left:27.48px;top:384.00px;font-size:13px;line-height:18px;color:#ffffff;letter-spacing:-0.165px;">Show partial list on last page if needed</span>
<span class="t" style="left:27.48px;top:413.00px;font-size:13px;line-height:18px;color:#ffffff;letter-spacing:-0.200px;">Separators</span>
<span class="t" style="left:27.48px;top:447.00px;font-size:13px;line-height:18px;color:#ffffff;letter-spacing:-0.430px;">Style</span>
<span class="t" style="left:109.08px;top:448.00px;font-size:13px;line-height:18px;color:#ffffff;letter-spacing:-0.079px;">Solid</span>
<span class="t" style="left:183.12px;top:447.00px;font-size:13px;line-height:18px;color:#ffffff;letter-spacing:0.081px;">Width</span>
<span class="t" style="left:269.00px;top:448.00px;font-size:13px;line-height:18px;color:#ffffff;letter-spacing:-0.009px;">24</span>
<span class="t" style="left:27.69px;top:487.00px;font-size:13px;line-height:18px;color:#ffffff;letter-spacing:-0.357px;">Color</span>
<span class="t" style="left:119.20px;top:487.00px;font-size:13px;line-height:18px;color:#6cb0f4;letter-spacing:-0.205px;">Primary (#000000)</span>
<span class="t" style="left:27.48px;top:548.00px;font-size:13px;line-height:18px;color:#ffffff;letter-spacing:-0.355px;">Style</span>
<span class="t" style="left:37.80px;top:581.00px;font-size:13px;line-height:18px;color:#ffffff;letter-spacing:-0.250px;">None (Custom)</span>
<span class="t" style="left:27.72px;top:641.00px;font-size:13px;line-height:18px;color:#ffffff;letter-spacing:-0.257px;">Opacity</span>
<span class="t" style="left:286.04px;top:641.00px;font-size:13px;line-height:18px;color:#ffffff;letter-spacing:-0.264px;">100</span>
<span class="t" style="left:311.31px;top:641.00px;font-size:13px;line-height:18px;color:#aeb4b7;letter-spacing:0.000px;">%</span>
<span class="t" style="left:27.40px;top:702.00px;font-size:13px;line-height:18px;color:#ffffff;letter-spacing:-0.209px;">Background style</span>
<span class="t" style="left:166.80px;top:703.00px;font-size:13px;line-height:18px;color:#ffffff;letter-spacing:-0.079px;">None</span>
<span class="t" style="left:27.40px;top:763.00px;font-size:13px;line-height:18px;color:#ffffff;letter-spacing:-0.114px;">Define each border independently</span>
<span class="t" style="left:27.40px;top:798.00px;font-size:13px;line-height:18px;color:#ffffff;letter-spacing:-0.112px;">Border style - all borders</span>
<span class="t" style="left:240.60px;top:798.00px;font-size:13px;line-height:18px;color:#ffffff;letter-spacing:-0.412px;">Roundness</span>
<div style="left:358px;top:10px;width:340px;height:803px;background:#60666a;border-radius:4px 4px 0 0;box-shadow:0 0 4px rgba(0,0,0,.32)"></div>
<div style="left:358px;top:10px;width:340px;height:39px;background:#292f31;border-radius:4px 4px 0 0"></div>
<div style="left:509px;top:64px;width:168px;height:30px;background:#51575a;"></div>
<svg style="left:657.8px;top:77px" width="10" height="7" viewBox="0 0 10 7"><path d="M0.1 0.2 L8.9 0.2 L4.5 5.1000000000000005Z" fill="#c3cbcf"/></svg>
<div style="left:378px;top:112px;width:298px;height:42px;background:#51575a;"></div>
<svg style="left:676.5px;top:120px" width="13" height="15" viewBox="0 0 13 15"><path d="M0.3 3 H12.7 M4.2 2.8 V1.6 Q4.2 0.6 5.2 0.6 H7.8 Q8.8 0.6 8.8 1.6 V2.8 M1.8 3.2 V13 Q1.8 14.3 3.1 14.3 H9.9 Q11.2 14.3 11.2 13 V3.2 M4.4 5.6 V11.8 M6.5 5.6 V11.8 M8.6 5.6 V11.8" fill="none" stroke="#8a9195" stroke-width="1"/></svg>
<div style="left:378px;top:169px;width:298px;height:30px;background:#51575a;"></div>
<svg style="left:676.5px;top:177px" width="13" height="15" viewBox="0 0 13 15"><path d="M0.3 3 H12.7 M4.2 2.8 V1.6 Q4.2 0.6 5.2 0.6 H7.8 Q8.8 0.6 8.8 1.6 V2.8 M1.8 3.2 V13 Q1.8 14.3 3.1 14.3 H9.9 Q11.2 14.3 11.2 13 V3.2 M4.4 5.6 V11.8 M6.5 5.6 V11.8 M8.6 5.6 V11.8" fill="none" stroke="#8a9195" stroke-width="1"/></svg>
<div style="left:378px;top:214px;width:298px;height:30px;background:#51575a;"></div>
<svg style="left:676.5px;top:222px" width="13" height="15" viewBox="0 0 13 15"><path d="M0.3 3 H12.7 M4.2 2.8 V1.6 Q4.2 0.6 5.2 0.6 H7.8 Q8.8 0.6 8.8 1.6 V2.8 M1.8 3.2 V13 Q1.8 14.3 3.1 14.3 H9.9 Q11.2 14.3 11.2 13 V3.2 M4.4 5.6 V11.8 M6.5 5.6 V11.8 M8.6 5.6 V11.8" fill="none" stroke="#8a9195" stroke-width="1"/></svg>
<div style="left:378px;top:259px;width:298px;height:30px;background:#51575a;"></div>
<svg style="left:676.5px;top:267px" width="13" height="15" viewBox="0 0 13 15"><path d="M0.3 3 H12.7 M4.2 2.8 V1.6 Q4.2 0.6 5.2 0.6 H7.8 Q8.8 0.6 8.8 1.6 V2.8 M1.8 3.2 V13 Q1.8 14.3 3.1 14.3 H9.9 Q11.2 14.3 11.2 13 V3.2 M4.4 5.6 V11.8 M6.5 5.6 V11.8 M8.6 5.6 V11.8" fill="none" stroke="#8a9195" stroke-width="1"/></svg>
<div style="left:378px;top:304px;width:298px;height:30px;background:#51575a;"></div>
<svg style="left:676.5px;top:312px" width="13" height="15" viewBox="0 0 13 15"><path d="M0.3 3 H12.7 M4.2 2.8 V1.6 Q4.2 0.6 5.2 0.6 H7.8 Q8.8 0.6 8.8 1.6 V2.8 M1.8 3.2 V13 Q1.8 14.3 3.1 14.3 H9.9 Q11.2 14.3 11.2 13 V3.2 M4.4 5.6 V11.8 M6.5 5.6 V11.8 M8.6 5.6 V11.8" fill="none" stroke="#8a9195" stroke-width="1"/></svg>
<div style="left:378px;top:349px;width:298px;height:30px;background:#51575a;"></div>
<svg style="left:676.5px;top:357px" width="13" height="15" viewBox="0 0 13 15"><path d="M0.3 3 H12.7 M4.2 2.8 V1.6 Q4.2 0.6 5.2 0.6 H7.8 Q8.8 0.6 8.8 1.6 V2.8 M1.8 3.2 V13 Q1.8 14.3 3.1 14.3 H9.9 Q11.2 14.3 11.2 13 V3.2 M4.4 5.6 V11.8 M6.5 5.6 V11.8 M8.6 5.6 V11.8" fill="none" stroke="#8a9195" stroke-width="1"/></svg>
<div style="left:378px;top:394px;width:298px;height:30px;background:#51575a;"></div>
<svg style="left:676.5px;top:402px" width="13" height="15" viewBox="0 0 13 15"><path d="M0.3 3 H12.7 M4.2 2.8 V1.6 Q4.2 0.6 5.2 0.6 H7.8 Q8.8 0.6 8.8 1.6 V2.8 M1.8 3.2 V13 Q1.8 14.3 3.1 14.3 H9.9 Q11.2 14.3 11.2 13 V3.2 M4.4 5.6 V11.8 M6.5 5.6 V11.8 M8.6 5.6 V11.8" fill="none" stroke="#8a9195" stroke-width="1"/></svg>
<div style="left:378px;top:439px;width:298px;height:30px;background:#51575a;"></div>
<svg style="left:676.5px;top:447px" width="13" height="15" viewBox="0 0 13 15"><path d="M0.3 3 H12.7 M4.2 2.8 V1.6 Q4.2 0.6 5.2 0.6 H7.8 Q8.8 0.6 8.8 1.6 V2.8 M1.8 3.2 V13 Q1.8 14.3 3.1 14.3 H9.9 Q11.2 14.3 11.2 13 V3.2 M4.4 5.6 V11.8 M6.5 5.6 V11.8 M8.6 5.6 V11.8" fill="none" stroke="#8a9195" stroke-width="1"/></svg>
<div style="left:378px;top:484px;width:298px;height:30px;background:#51575a;"></div>
<svg style="left:676.5px;top:492px" width="13" height="15" viewBox="0 0 13 15"><path d="M0.3 3 H12.7 M4.2 2.8 V1.6 Q4.2 0.6 5.2 0.6 H7.8 Q8.8 0.6 8.8 1.6 V2.8 M1.8 3.2 V13 Q1.8 14.3 3.1 14.3 H9.9 Q11.2 14.3 11.2 13 V3.2 M4.4 5.6 V11.8 M6.5 5.6 V11.8 M8.6 5.6 V11.8" fill="none" stroke="#8a9195" stroke-width="1"/></svg>
<div style="left:413px;top:534px;width:225px;height:35px;background:#696f72;border:1px solid #757b7f;border-radius:3px;box-sizing:border-box"></div>
<svg style="left:452px;top:545px" width="14" height="15" viewBox="0 0 14 15"><path d="M7 0.3 V14.5 M0.2 7.4 H13.8" stroke="#e3e5e6" stroke-width="2.1" fill="none"/></svg>
<div style="left:509px;top:589px;width:168px;height:30px;background:#51575a;"></div>
<svg style="left:657.8px;top:602px" width="10" height="7" viewBox="0 0 10 7"><path d="M0.1 0.9 L8.9 0.9 L4.5 5.800000000000001Z" fill="#8d969a"/></svg>
<div style="left:509px;top:629px;width:168px;height:30px;background:#51575a;"></div>
<div style="left:413px;top:679px;width:225px;height:35px;background:#696f72;border:1px solid #757b7f;border-radius:3px;box-sizing:border-box"></div>
<svg style="left:450px;top:690px" width="14" height="15" viewBox="0 0 14 15"><path d="M7 0.3 V14.5 M0.2 7.4 H13.8" stroke="#e3e5e6" stroke-width="2.1" fill="none"/></svg>
<div style="left:659px;top:769px;width:18px;height:18px;background:#51575a;"></div>
<svg style="left:659px;top:769px" width="18" height="18" viewBox="0 0 18 18"><path d="M4.2 8.1 L7.7 11.5 L13.8 5.5" fill="none" stroke="#fff" stroke-width="2.7"/></svg>
<div style="left:358px;top:797px;width:340px;height:1px;background:#555b5f;"></div>
<span class="t" style="left:369.26px;top:20.00px;font-size:14px;line-height:20px;color:#ffffff;letter-spacing:0.369px;">Search for Autos</span>
<span class="t" style="left:378.48px;top:70.00px;font-size:13px;line-height:18px;color:#ffffff;letter-spacing:-0.619px;">Type</span>
<span class="t" style="left:517.21px;top:70.00px;font-size:13px;line-height:18px;color:#ffffff;letter-spacing:-0.158px;">Auto</span>
<span class="t" style="left:381.66px;top:117.00px;font-size:13px;line-height:18px;color:#ffffff;letter-spacing:-0.214px;">autopožičovňa =</span>
<span class="t" style="left:483.89px;top:117.00px;font-size:13px;line-height:18px;color:#6cb0f4;letter-spacing:-0.155px;">Get autopozicovna from page</span>
<span class="t" style="left:381.73px;top:174.00px;font-size:13px;line-height:18px;color:#ffffff;letter-spacing:-0.488px;">značka =</span>
<span class="t" style="left:440.89px;top:174.00px;font-size:13px;line-height:18px;color:#6cb0f4;letter-spacing:-0.402px;">Get značka from page URL</span>
<span class="t" style="left:381.43px;top:219.00px;font-size:13px;line-height:18px;color:#ffffff;letter-spacing:-0.121px;">karoséria is in</span>
<span class="t" style="left:469.93px;top:219.00px;font-size:13px;line-height:18px;color:#6cb0f4;letter-spacing:-0.188px;">ponuka-vozidiel's karoseria</span>
<span class="t" style="left:381.43px;top:264.00px;font-size:13px;line-height:18px;color:#ffffff;letter-spacing:-0.066px;">rok výroby ≥</span>
<span class="t" style="left:461.33px;top:264.00px;font-size:13px;line-height:18px;color:#6cb0f4;letter-spacing:-0.083px;">ponuka-vozidiel's rok min</span>
<span class="t" style="left:381.43px;top:309.00px;font-size:13px;line-height:18px;color:#ffffff;letter-spacing:-0.066px;">rok výroby ≤</span>
<span class="t" style="left:461.33px;top:309.00px;font-size:13px;line-height:18px;color:#6cb0f4;letter-spacing:-0.148px;">ponuka-vozidiel's rok max</span>
<span class="t" style="left:381.43px;top:354.00px;font-size:13px;line-height:18px;color:#ffffff;letter-spacing:-0.118px;">palivo is in</span>
<span class="t" style="left:451.03px;top:354.00px;font-size:13px;line-height:18px;color:#6cb0f4;letter-spacing:-0.140px;">ponuka-vozidiel's palivo</span>
<span class="t" style="left:381.43px;top:399.00px;font-size:13px;line-height:18px;color:#ffffff;letter-spacing:-0.192px;">prevodovka =</span>
<span class="t" style="left:467.73px;top:399.00px;font-size:13px;line-height:18px;color:#6cb0f4;letter-spacing:-0.164px;">ponuka-vozidiel's prevodovka</span>
<span class="t" style="left:381.42px;top:444.00px;font-size:13px;line-height:18px;color:#ffffff;letter-spacing:-0.065px;">náhon is in</span>
<span class="t" style="left:453.53px;top:444.00px;font-size:13px;line-height:18px;color:#6cb0f4;letter-spacing:-0.080px;">ponuka-vozidiel's pohon</span>
<span class="t" style="left:382.22px;top:489.00px;font-size:13px;line-height:18px;color:#ffffff;letter-spacing:-0.305px;">viditelne? =</span>
<span class="t" style="left:455.20px;top:489.00px;font-size:13px;line-height:18px;color:#6cb0f4;letter-spacing:-0.129px;">"yes"</span>
<span class="t" style="left:381.32px;top:134.50px;font-size:13px;line-height:18px;color:#6cb0f4;letter-spacing:-1.415px;">URL</span>
<span class="t" style="left:472.21px;top:542.00px;font-size:14px;line-height:20px;color:#ffffff;letter-spacing:-0.134px;">Add a new constraint</span>
<span class="t" style="left:377.48px;top:595.00px;font-size:13px;line-height:18px;color:#ffffff;letter-spacing:-0.222px;">Sort by</span>
<span class="t" style="left:516.82px;top:596.00px;font-size:13px;line-height:18px;color:#ffffff;letter-spacing:-0.040px;">Unsorted</span>
<span class="t" style="left:377.40px;top:635.00px;font-size:13px;line-height:18px;color:#ffffff;letter-spacing:-0.206px;">Descending</span>
<span class="t" style="left:517.20px;top:635.00px;font-size:13px;line-height:18px;color:#6cb0f4;letter-spacing:-0.429px;">"yes"</span>
<span class="t" style="left:470.11px;top:687.00px;font-size:14px;line-height:20px;color:#ffffff;letter-spacing:-0.045px;">Add another sort field</span>
<span class="t" style="left:377.48px;top:734.00px;font-size:13px;line-height:18px;color:#c9cdd0;letter-spacing:-0.129px;">Sorted lists return a maximum of 50 000 results.</span>
<span class="t" style="left:377.32px;top:768.00px;font-size:13px;line-height:18px;color:#ffffff;letter-spacing:-0.065px;">Ignore empty constraints</span>
<div style="left:0px;top:808px;width:1317px;height:5px;background:#dddde0;"></div>
<div style="left:0px;top:808px;width:360px;height:5px;background:#d4d4d4;"></div>
<div style="left:107px;top:808px;width:44px;height:5px;background:#ebebeb;"></div>
<div style="left:151px;top:808px;width:1px;height:5px;background:#bdbdbd;"></div>
</div></body></html>
